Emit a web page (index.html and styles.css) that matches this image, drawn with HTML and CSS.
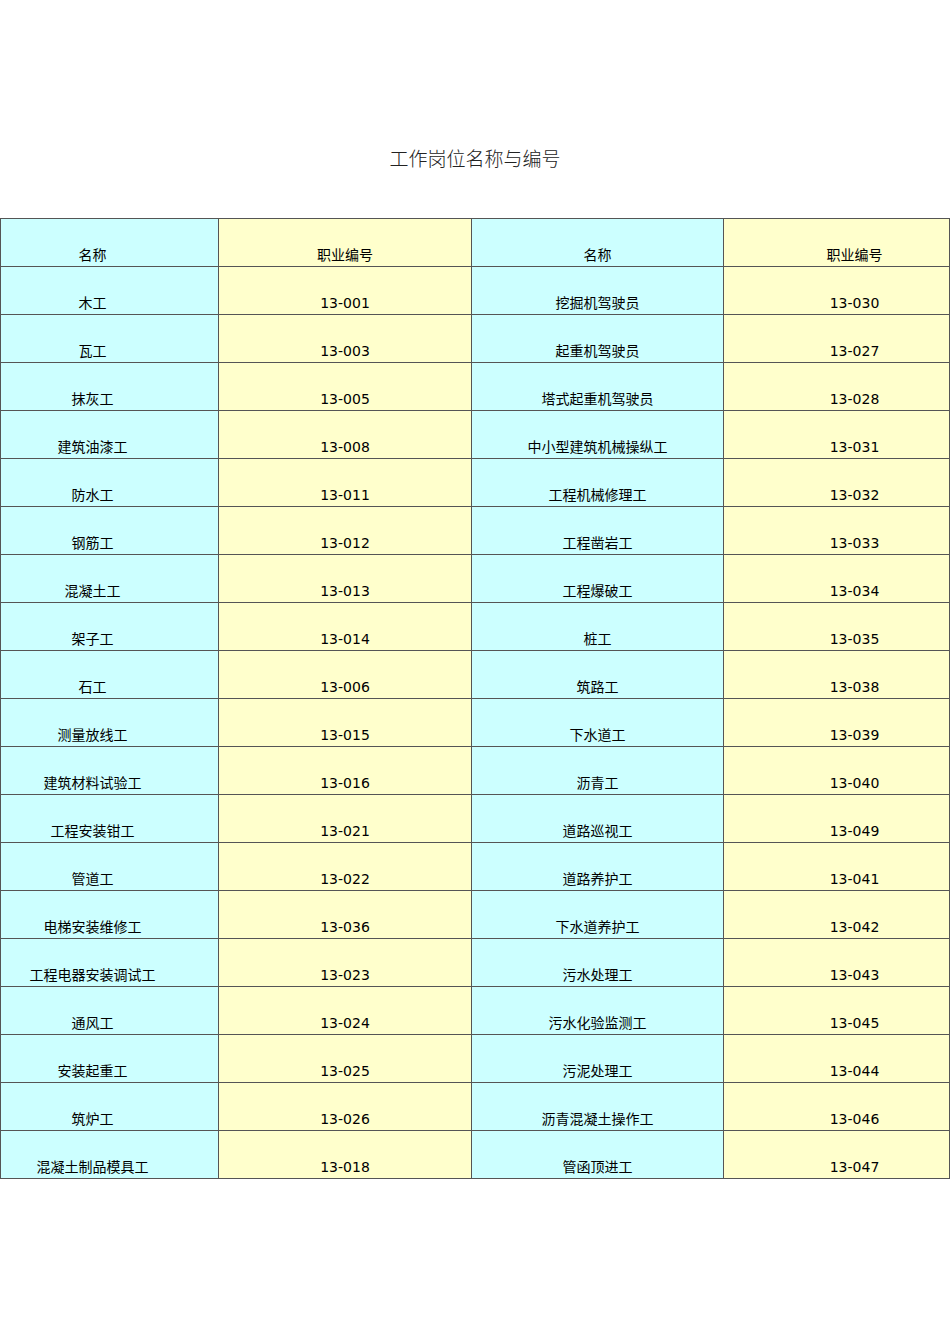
FILE: index.html
```html
<!DOCTYPE html>
<html lang="zh">
<head>
<meta charset="utf-8">
<title>工作岗位名称与编号</title>
<link rel="stylesheet" href="styles.css">
</head>
<body>
<div class="title">工作岗位名称与编号</div>
<div class="frame">
<table class="grid">
<colgroup><col class="c1"><col class="c2"><col class="c3"><col class="c4"></colgroup>
<tr><td class="n">名称</td><td class="k">职业编号</td><td class="n">名称</td><td class="k">职业编号</td></tr>
<tr><td class="n">木工</td><td class="k">13-001</td><td class="n">挖掘机驾驶员</td><td class="k">13-030</td></tr>
<tr><td class="n">瓦工</td><td class="k">13-003</td><td class="n">起重机驾驶员</td><td class="k">13-027</td></tr>
<tr><td class="n">抹灰工</td><td class="k">13-005</td><td class="n">塔式起重机驾驶员</td><td class="k">13-028</td></tr>
<tr><td class="n">建筑油漆工</td><td class="k">13-008</td><td class="n">中小型建筑机械操纵工</td><td class="k">13-031</td></tr>
<tr><td class="n">防水工</td><td class="k">13-011</td><td class="n">工程机械修理工</td><td class="k">13-032</td></tr>
<tr><td class="n">钢筋工</td><td class="k">13-012</td><td class="n">工程凿岩工</td><td class="k">13-033</td></tr>
<tr><td class="n">混凝土工</td><td class="k">13-013</td><td class="n">工程爆破工</td><td class="k">13-034</td></tr>
<tr><td class="n">架子工</td><td class="k">13-014</td><td class="n">桩工</td><td class="k">13-035</td></tr>
<tr><td class="n">石工</td><td class="k">13-006</td><td class="n">筑路工</td><td class="k">13-038</td></tr>
<tr><td class="n">测量放线工</td><td class="k">13-015</td><td class="n">下水道工</td><td class="k">13-039</td></tr>
<tr><td class="n">建筑材料试验工</td><td class="k">13-016</td><td class="n">沥青工</td><td class="k">13-040</td></tr>
<tr><td class="n">工程安装钳工</td><td class="k">13-021</td><td class="n">道路巡视工</td><td class="k">13-049</td></tr>
<tr><td class="n">管道工</td><td class="k">13-022</td><td class="n">道路养护工</td><td class="k">13-041</td></tr>
<tr><td class="n">电梯安装维修工</td><td class="k">13-036</td><td class="n">下水道养护工</td><td class="k">13-042</td></tr>
<tr><td class="n">工程电器安装调试工</td><td class="k">13-023</td><td class="n">污水处理工</td><td class="k">13-043</td></tr>
<tr><td class="n">通风工</td><td class="k">13-024</td><td class="n">污水化验监测工</td><td class="k">13-045</td></tr>
<tr><td class="n">安装起重工</td><td class="k">13-025</td><td class="n">污泥处理工</td><td class="k">13-044</td></tr>
<tr><td class="n">筑炉工</td><td class="k">13-026</td><td class="n">沥青混凝土操作工</td><td class="k">13-046</td></tr>
<tr><td class="n">混凝土制品模具工</td><td class="k">13-018</td><td class="n">管函顶进工</td><td class="k">13-047</td></tr>
</table>
</div>
</body>
</html>
```
FILE: styles.css
```css
html, body {
  margin: 0;
  padding: 0;
  background: #ffffff;
  overflow-x: hidden;
}
body {
  font-family: "DejaVu Sans", "Noto Sans CJK SC", sans-serif;
  color: #000;
}
.title {
  padding-top: 148px;
  height: 20px;
  line-height: 20px;
  margin-bottom: 50px;
  text-align: center;
  font-family: "Noto Sans CJK SC", serif;
  font-size: 19px;
  font-weight: 300;
  color: #222;
}
.frame {
  width: 950px;
  box-sizing: border-box;
  border-left: 1px solid #555;
  border-right: 1px solid #555;
  overflow: hidden;
}
.grid {
  border-collapse: collapse;
  table-layout: fixed;
  width: 1019px;
  margin-left: -35px;
  font-size: 14px;
}
.c1 { width: 252px; }
.c2 { width: 253px; }
.c3 { width: 252px; }
.c4 { width: 262px; }
.grid td {
  border: 1px solid #555;
  height: 48px;
  padding: 0 0 3px 0;
  box-sizing: border-box;
  vertical-align: bottom;
  text-align: center;
  line-height: 16px;
  white-space: nowrap;
}
.grid td.n { background: #ccffff; }
.grid td.k { background: #ffffcc; }
```
